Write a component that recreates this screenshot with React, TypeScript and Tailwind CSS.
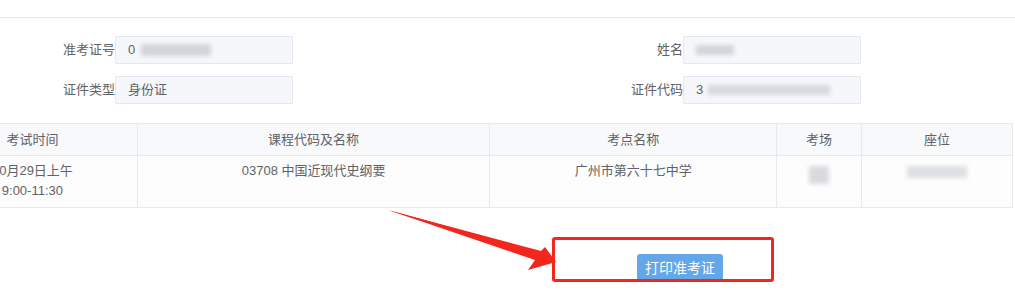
import type { ReactNode } from "react";

const font = { fontFamily: '"Liberation Sans", "Noto Sans CJK SC", sans-serif' };

function Blur({ className }: { className: string }) {
  return <span className={`inline-block bg-[#c9ccd1] blur-[2px] ${className}`} />;
}

function Field({ label, children }: { label: string; children: ReactNode }) {
  return (
    <>
      <div className="text-right text-[13px] leading-[28px] text-[#606266]">{label}</div>
      <div className="h-[28px] w-[178px] rounded-[2px] border border-[#e4e7ed] bg-[#f5f7fa] pl-[12px] flex items-center text-[13px] text-[#606266]">
        {children}
      </div>
    </>
  );
}

const cols = [210, 353, 287, 85, 151];
const heads = ["考试时间", "课程代码及名称", "考点名称", "考场", "座位"];

export default function App() {
  return (
    <div className="relative h-[300px] w-[1015px] overflow-hidden bg-white" style={font}>
      <div className="h-[18px] border-b border-[#e4e4e4]" />

      <div className="mt-[18px] grid grid-cols-[115px_178px_390px_178px] gap-y-[12px]">
        <Field label="准考证号">
          <span>0</span>
          <Blur className="ml-[6px] h-[12px] w-[70px] opacity-80" />
        </Field>
        <Field label="姓名">
          <Blur className="h-[10px] w-[38px] opacity-80" />
        </Field>
        <Field label="证件类型">
          <span>身份证</span>
        </Field>
        <Field label="证件代码">
          <span>3</span>
          <Blur className="ml-[5px] h-[10px] w-[122px] opacity-70" />
        </Field>
      </div>

      <div className="mt-[19px] w-[1013px] overflow-hidden">
        <table className="-ml-[73px] table-fixed border-collapse text-[13px] text-[#606266]">
          <colgroup>
            {cols.map((w, i) => (
              <col key={i} style={{ width: w }} />
            ))}
          </colgroup>
          <thead>
            <tr className="h-[32px] bg-[#f7f9fb]">
              {heads.map((h) => (
                <th key={h} className="border border-[#e6e9ee] font-normal text-center leading-[20px]">
                  {h}
                </th>
              ))}
            </tr>
          </thead>
          <tbody>
            <tr className="h-[52px] bg-[#fdfdfd] align-top">
              <td className="border border-[#e6e9ee] pt-[5px] text-center leading-[20px]">
                10月29日上午
                <br />
                9:00-11:30
              </td>
              <td className="border border-[#e6e9ee] pt-[5px] text-center leading-[20px]">
                03708 中国近现代史纲要
              </td>
              <td className="border border-[#e6e9ee] pt-[5px] text-center leading-[20px]">
                广州市第六十七中学
              </td>
              <td className="border border-[#e6e9ee] pt-[10px] text-center leading-[20px]">
                <Blur className="h-[18px] w-[20px] opacity-70" />
              </td>
              <td className="border border-[#e6e9ee] pt-[8px] text-center leading-[20px]">
                <Blur className="h-[12px] w-[60px] opacity-60" />
              </td>
            </tr>
          </tbody>
        </table>
      </div>

      <div className="mt-[46px] pl-[637px]">
        <button className="h-[28px] w-[86px] rounded-[3px] bg-[#63a7e8] text-[14px] text-white">
          打印准考证
        </button>
      </div>

      <div className="absolute left-[552px] top-[237px] h-[45px] w-[222px] rounded-[3px] border-[3px] border-[#f2261c]" />

      <svg className="absolute left-0 top-0" width="1015" height="300" viewBox="0 0 1015 300">
        <polygon points="388,210 540,252 537,258 " fill="#f2261c" />
        <polygon points="388,210 541,251 545,247 556,262 528,270 535,260" fill="#f2261c" />
      </svg>
    </div>
  );
}
